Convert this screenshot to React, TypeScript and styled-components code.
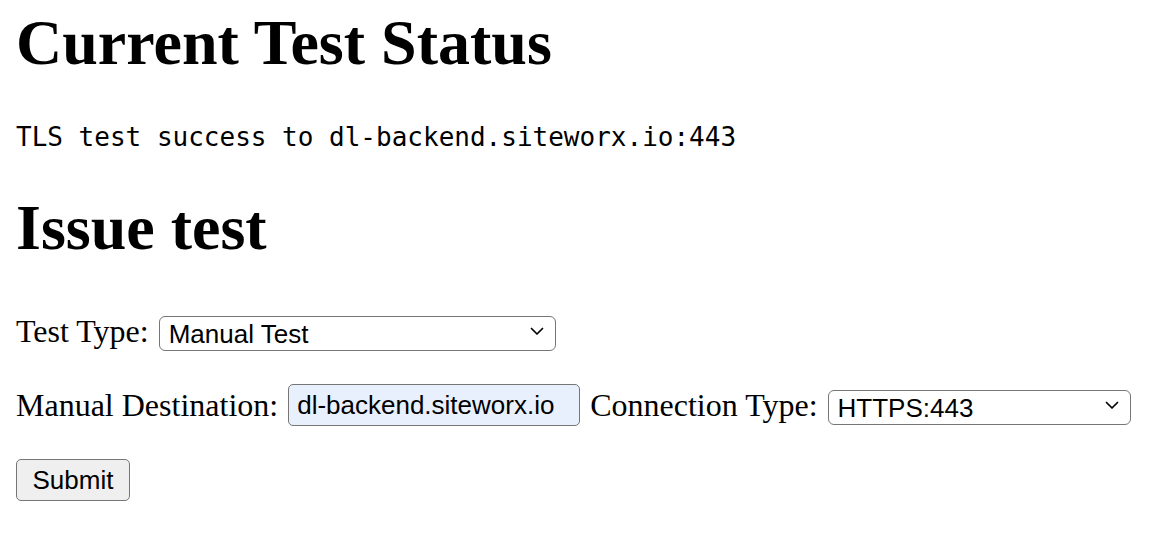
import { useState } from 'react'
import styled, { createGlobalStyle } from 'styled-components'

const GlobalStyle = createGlobalStyle`
  body {
    margin: 0;
    background: #ffffff;
    color: #000000;
    font-family: 'Liberation Serif', 'Times New Roman', serif;
  }
`

const Page = styled.main`
  padding: 0 16px;
`

const Title = styled.h1<{ $top: number }>`
  margin: ${({ $top }) => $top}px 0 0;
  font-size: 64px;
  line-height: 64px;
  font-weight: 700;
`

const StatusLine = styled.pre`
  margin: 47px 0 0;
  font-family: 'DejaVu Sans Mono', 'Liberation Mono', monospace;
  font-size: 26px;
  line-height: 30px;
`

const Form = styled.form`
  display: flex;
  flex-direction: column;
  align-items: flex-start;
  margin-top: 53px;
`

const Row = styled.div<{ $gapTop?: number }>`
  display: flex;
  align-items: center;
  gap: 10px;
  margin-top: ${({ $gapTop }) => $gapTop ?? 0}px;
  font-size: 32px;
  line-height: 36px;
`

const Label = styled.label`
  white-space: nowrap;
`

const SelectWrap = styled.div<{ $width: number }>`
  position: relative;
  width: ${({ $width }) => $width}px;
  height: 35px;
`

const Select = styled.select`
  appearance: none;
  width: 100%;
  height: 100%;
  box-sizing: border-box;
  margin: 0;
  padding: 0 30px 0 9px;
  border: 1px solid #767676;
  border-radius: 6px;
  background: #ffffff;
  color: #000000;
  font-family: 'Liberation Sans', Arial, sans-serif;
  font-size: 26px;
  outline: none;
`

const Chevron = styled.svg`
  position: absolute;
  right: 12px;
  top: 50%;
  width: 14px;
  height: 9px;
  margin-top: -4px;
  pointer-events: none;
`

const TextInput = styled.input`
  width: 292px;
  height: 42px;
  box-sizing: border-box;
  margin: 0;
  padding: 0 8px;
  border: 1px solid #767676;
  border-radius: 5px;
  background: #e8f0fe;
  color: #000000;
  font-family: 'Liberation Sans', Arial, sans-serif;
  font-size: 26px;
  outline: none;
`

const SubmitButton = styled.button`
  width: 114px;
  height: 42px;
  margin: 0;
  padding: 0;
  border: 1px solid #767676;
  border-radius: 5px;
  background: #efefef;
  color: #000000;
  font-family: 'Liberation Sans', Arial, sans-serif;
  font-size: 26px;
`

const DownArrow = () => (
  <Chevron viewBox="0 0 14 9">
    <path d="M1.5 1.5 L7 7 L12.5 1.5" fill="none" stroke="#000" strokeWidth="1.7" strokeLinecap="round" strokeLinejoin="round" />
  </Chevron>
)

export default function App() {
  const [testType, setTestType] = useState('manual')
  const [destination, setDestination] = useState('dl-backend.siteworx.io')
  const [connection, setConnection] = useState('https')

  return (
    <>
      <GlobalStyle />
      <Page>
        <Title $top={11}>Current Test Status</Title>
        <StatusLine>TLS test success to dl-backend.siteworx.io:443</StatusLine>
        <Title $top={44}>Issue test</Title>
        <Form onSubmit={(e) => e.preventDefault()}>
          <Row>
            <Label htmlFor="test-type">Test Type:</Label>
            <SelectWrap $width={397}>
              <Select id="test-type" value={testType} onChange={(e) => setTestType(e.target.value)}>
                <option value="manual">Manual Test</option>
                <option value="auto">Automatic Test</option>
              </Select>
              <DownArrow />
            </SelectWrap>
          </Row>
          <Row $gapTop={35}>
            <Label htmlFor="destination">Manual Destination:</Label>
            <TextInput
              id="destination"
              value={destination}
              onChange={(e) => setDestination(e.target.value)}
            />
            <Label htmlFor="connection">Connection Type:</Label>
            <SelectWrap $width={303}>
              <Select id="connection" value={connection} onChange={(e) => setConnection(e.target.value)}>
                <option value="https">HTTPS:443</option>
                <option value="tls">TLS:443</option>
              </Select>
              <DownArrow />
            </SelectWrap>
          </Row>
          <Row $gapTop={33}>
            <SubmitButton type="submit">Submit</SubmitButton>
          </Row>
        </Form>
      </Page>
    </>
  )
}
